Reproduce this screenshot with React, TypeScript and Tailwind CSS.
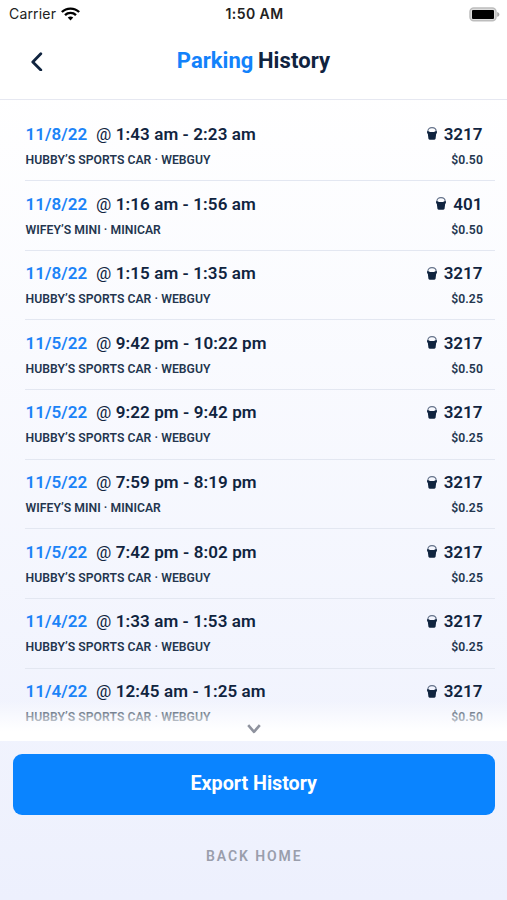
type Session = {
  date: string;
  time: string;
  car: string;
  meter: string;
  price: string;
};

const HUBBY = "HUBBY’S SPORTS CAR · WEBGUY";
const WIFEY = "WIFEY’S MINI · MINICAR";

const sessions: Session[] = [
  { date: "11/8/22", time: "1:43 am - 2:23 am", car: HUBBY, meter: "3217", price: "$0.50" },
  { date: "11/8/22", time: "1:16 am - 1:56 am", car: WIFEY, meter: "401", price: "$0.50" },
  { date: "11/8/22", time: "1:15 am - 1:35 am", car: HUBBY, meter: "3217", price: "$0.25" },
  { date: "11/5/22", time: "9:42 pm - 10:22 pm", car: HUBBY, meter: "3217", price: "$0.50" },
  { date: "11/5/22", time: "9:22 pm - 9:42 pm", car: HUBBY, meter: "3217", price: "$0.25" },
  { date: "11/5/22", time: "7:59 pm - 8:19 pm", car: WIFEY, meter: "3217", price: "$0.25" },
  { date: "11/5/22", time: "7:42 pm - 8:02 pm", car: HUBBY, meter: "3217", price: "$0.25" },
  { date: "11/4/22", time: "1:33 am - 1:53 am", car: HUBBY, meter: "3217", price: "$0.25" },
  { date: "11/4/22", time: "12:45 am - 1:25 am", car: HUBBY, meter: "3217", price: "$0.50" },
];

function WifiIcon() {
  return (
    <svg width="19" height="14" viewBox="0 0 18 14" preserveAspectRatio="none" fill="none" stroke="#000" strokeWidth="2.2">
      <path d="M.8 5.100C5.300.400 12.700.400 17.200 5.100" />
      <path d="M3.800 8.100c2.900-2.900 7.500-2.900 10.400 0" />
      <path d="M6.400 10.600c1.500-1.400 3.700-1.400 5.200 0L9 13.400z" fill="#000" stroke="none" />
    </svg>
  );
}

function BatteryIcon() {
  return (
    <svg width="31" height="15" viewBox="0 0 31 15" fill="none">
      <rect x="1" y="1" width="26" height="12.8" rx="3.8" fill="#ddd" stroke="#bdbdbd" strokeWidth="1.5" />
      <rect x="3" y="2.900" width="22" height="9" rx="1" fill="#000" />
      <path d="M28.200 5v4.800c1.400-.5 2.200-1.400 2.200-2.400S29.600 5.500 28.200 5z" fill="#a8a8a8" />
    </svg>
  );
}

function MeterIcon() {
  return (
    <svg width="10" height="13" viewBox="0 0 10 13" fill="none" className="block">
      <path d="M.8 5.400V4.600C.8 2.200 2.500.600 5 .600s4.200 1.600 4.200 4v.8" stroke="#64728a" strokeWidth="1.100" />
      <path d="M.1 4.200h1.500L3 5h4l1.400-.8h1.500v2.200h-.7l-.6 5.200c-.1.700-.6 1.100-1.200 1.100H2.600c-.6 0-1.100-.4-1.200-1.100L.8 6.400H.1z" fill="#10243f" />
    </svg>
  );
}

function Row({ session, last }: { session: Session; last: boolean }) {
  return (
    <li className={`ml-[25px] mr-3 h-[69.65px] shrink-0 pl-[0.5px] pr-3 pt-[12.500px] ${last ? "" : "border-b border-[#e3e7f1]"}`}>
      <div className="flex h-5 items-center justify-between text-[17px] font-semibold leading-5 text-[#10243f]">
        <div className="flex whitespace-pre">
          <span className="w-[70.5px] tracking-[0.05px] text-[#1b83f7]">{session.date}</span>
          <span className="tracking-[0.1px]">
            <span className="font-normal">@</span> {session.time}
          </span>
        </div>
        <div className="flex items-center gap-[7px] pr-[0.5px]">
          <MeterIcon />
          <span>{session.meter}</span>
        </div>
      </div>
      <div className="mt-2 flex h-4 items-center justify-between text-[12.2px] font-semibold leading-4 text-[#24364f]">
        <span className="tracking-[0.04px]">{session.car}</span>
        <span className="tracking-[0.1px]">{session.price}</span>
      </div>
    </li>
  );
}

export default function App() {
  return (
    <div className="flex h-[900px] w-[507px] flex-col overflow-hidden bg-linear-to-b from-white from-10% to-[#edf0fd] font-['Roboto',sans-serif]">
      <div className="grid h-7 shrink-0 grid-cols-3 items-center pl-[9px] pr-[7px] font-['Inter',sans-serif] text-[14px] leading-5 text-[#222]">
        <div className="flex items-center gap-[5px]">
          <span className="tracking-[0.18px]">Carrier</span>
          <WifiIcon />
        </div>
        <span className="text-center font-semibold tracking-[0.45px]">1:50 AM</span>
        <div className="flex justify-end">
          <BatteryIcon />
        </div>
      </div>

      <header className="grid h-[72px] shrink-0 grid-cols-[60px_1fr_60px] items-center border-b border-[#e6e8f1] bg-white pb-[6px]">
        <button aria-label="Back" className="pl-[30px]">
          <svg width="14" height="20" viewBox="0 0 14 20" fill="none" stroke="#10243f" strokeWidth="2.800" strokeLinecap="round" strokeLinejoin="round">
            <path d="M10.800 2.800 2.800 11l8 8" />
          </svg>
        </button>
        <h1 className="text-center text-[22px] font-bold leading-7 text-[#10243f] [word-spacing:-1px]">
          <span className="tracking-[0.05px] text-[#1282fb]">Parking</span> <span className="tracking-[0.1px]">History</span>
        </h1>
      </header>

      <main className="relative h-[641px] shrink-0 overflow-hidden">
        <ul className="flex flex-col pt-[11.400px]">
          {sessions.map((session, i) => (
            <Row key={i} session={session} last={i === sessions.length - 1} />
          ))}
        </ul>
        <div className="absolute inset-x-0 bottom-0 flex h-10 items-end justify-center bg-linear-to-b from-white/0 to-white to-75% pb-[7px]">
          <svg width="14" height="10" viewBox="0 0 14 10" fill="none" stroke="#8e929e" strokeWidth="2.600" strokeLinejoin="round">
            <path d="M1.200 1.200 7 7.800l5.800-6.600" />
          </svg>
        </div>
      </main>

      <footer className="flex flex-col items-center pl-[13px] pr-[12.500px] pt-[13px]">
        <button className="h-[61px] w-full rounded-[9px] bg-[#0a84ff] pb-[2px] text-[19.7px] font-bold leading-6 text-white">
          Export History
        </button>
        <button className="mt-[31px] pl-px text-[14px] font-semibold leading-5 tracking-[1.9px] text-[#9a9eac]">BACK HOME</button>
      </footer>
    </div>
  );
}
